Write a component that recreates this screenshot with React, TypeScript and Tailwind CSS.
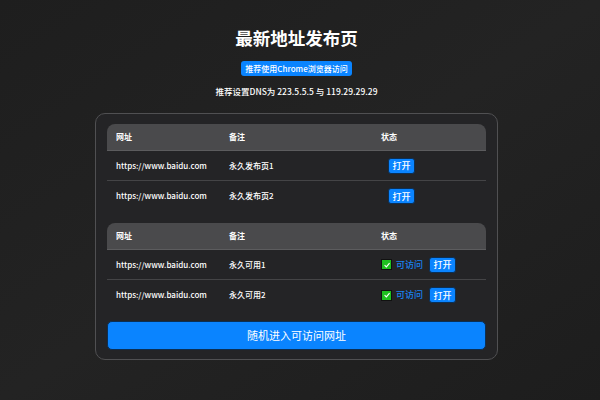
const font = "font-['Noto_Sans_CJK_SC','Noto_Sans',sans-serif]";

type Row = { url: string; note: string; ok?: boolean };

const table1: Row[] = [
  { url: "https://www.baidu.com", note: "永久发布页1" },
  { url: "https://www.baidu.com", note: "永久发布页2" },
];

const table2: Row[] = [
  { url: "https://www.baidu.com", note: "永久可用1", ok: true },
  { url: "https://www.baidu.com", note: "永久可用2", ok: true },
];

function OpenButton() {
  return (
    <button className="h-[16px] w-[27px] rounded-[3px] border border-[#0b2f55] bg-[#0a84ff] text-[9px] font-medium leading-none text-white">
      打开
    </button>
  );
}

function CheckBox() {
  return (
    <span className="flex h-[11px] w-[11px] items-center justify-center border border-[#111] bg-[#1fc01f]">
      <svg width="8" height="8" viewBox="0 0 10 10" fill="none">
        <path d="M2 5.2 4.2 7.4 8.2 2.6" stroke="white" strokeWidth="1.4" />
      </svg>
    </span>
  );
}

function Table({ rows, status }: { rows: Row[]; status: boolean }) {
  return (
    <div className="text-[8px] font-medium text-white">
      <div className="grid h-[27px] grid-cols-[113px_152px_1fr] items-center rounded-t-[8px] border-b border-[#5c5c5e] bg-[#4a4a4c] px-[9px] font-bold">
        <span>网址</span>
        <span>备注</span>
        <span>状态</span>
      </div>
      {rows.map((r, i) => (
        <div
          key={i}
          className={
            "grid h-[30px] grid-cols-[113px_152px_1fr] items-center px-[9px] " +
            (i < rows.length - 1 ? "border-b border-[#444446]" : "")
          }
        >
          <span>{r.url}</span>
          <span>{r.note}</span>
          {status ? (
            <span className="flex items-center">
              <CheckBox />
              <span className="ml-[4px] text-[9px] text-[#1a82f0]">可访问</span>
              <span className="ml-[6px] flex">
                <OpenButton />
              </span>
            </span>
          ) : (
            <span className="ml-[7px] flex">
              <OpenButton />
            </span>
          )}
        </div>
      ))}
    </div>
  );
}

export default function App() {
  return (
    <div className={`flex h-screen flex-col items-center bg-gradient-to-br from-[#1e1e1e] via-[#232323] to-[#1d1d1d] pr-[7px] pt-[27px] ${font}`}>
      <h1 className="text-[17.5px] font-bold leading-[22px] text-white">最新地址发布页</h1>
      <div className="mt-[12px] flex h-[15px] items-center rounded-[3px] bg-[#0a84ff] px-[4px] text-[8px] font-medium text-white">
        推荐使用Chrome浏览器访问
      </div>
      <p className="mt-[8px] text-[8.5px] font-medium leading-[14px] text-white">推荐设置DNS为 223.5.5.5 与 119.29.29.29</p>
      <div className="mt-[15px] w-[403px] rounded-[10px] border border-[#505052] bg-[#242426] px-[11px] pb-[9px] pt-[10px]">
        <Table rows={table1} status={false} />
        <div className="mt-[12px]">
          <Table rows={table2} status={true} />
        </div>
        <button className="mt-[11px] h-[29px] w-full rounded-[5px] border border-[#0b2f55] bg-[#0a84ff] text-[11px] text-white">
          随机进入可访问网址
        </button>
      </div>
    </div>
  );
}
